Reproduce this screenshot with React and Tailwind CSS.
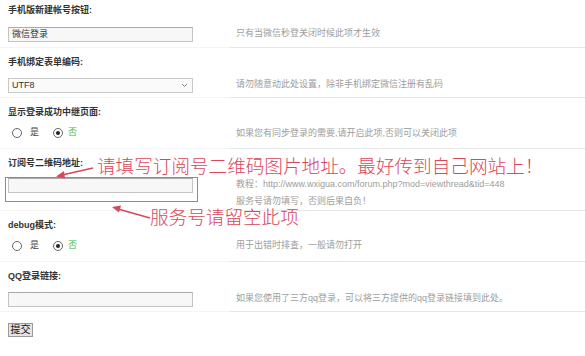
const cjk = { fontFamily: '"Liberation Sans", "Noto Sans CJK SC", sans-serif' };

function Label({ children, first }) {
    return (
        <div className={`${first ? "pt-[3px]" : "pt-[7px]"} pl-[8px] text-[9px] leading-[14px] font-bold text-[#333]`}>
            {children}
        </div>
    );
}

function Row({ children, tips, pt = "pt-[9px]", tipPt = "pt-[7px]", pb = "pb-[4px]" }) {
    return (
        <div className="flex items-stretch">
            <div className={`w-[230px] pl-[8px] ${pt} ${pb} border-b border-[#f4f4f4]`}>{children}</div>
            <div className={`flex-1 pl-[6px] ${tipPt} border-b border-[#e8e8e8] text-[9px] leading-[17px] text-[#9d9d9d]`}>
                {tips}
            </div>
        </div>
    );
}

function Radios() {
    return (
        <div className="flex items-center h-[15px] text-[9px] text-[#444]">
            <span className="w-[10px] h-[10px] rounded-full border border-[#666] bg-white ml-[4px]"></span>
            <span className="ml-[8px]">是</span>
            <span className="w-[10px] h-[10px] rounded-full border border-[#666] bg-white ml-[14px] flex items-center justify-center">
                <span className="w-[4px] h-[4px] rounded-full bg-[#222]"></span>
            </span>
            <span className="ml-[5px] text-[#3cb94a]">否</span>
        </div>
    );
}

function TextInput({ value }) {
    return (
        <div className="w-[185px] h-[15px] border border-[#c4c4c4] border-t-[#a9a9a9] bg-[#f7f7f7] text-[9px] leading-[13px] pl-[3px] text-[#333]">
            {value}
        </div>
    );
}

export default function App() {
    return (
        <div className="relative w-[585px] h-[356px] bg-white overflow-hidden" style={cjk}>
            <Label first>手机版新建帐号按钮:</Label>
            <Row pt="pt-[10px]" tipPt="pt-[8px]" pb="pb-[5px]" tips="只有当微信秒登关闭时候此项才生效">
                <TextInput value="微信登录" />
            </Row>

            <Label>手机绑定表单编码:</Label>
            <Row tips="请勿随意动此处设置，除非手机绑定微信注册有乱码">
                <div className="w-[185px] h-[15px] border border-[#c8c8c8] bg-[#fafafa] flex items-center justify-between px-[3px] text-[9px] text-[#333]">
                    <span>UTF8</span>
                    <svg width="7" height="5" viewBox="0 0 7 5" className="mr-[1px]">
                        <path d="M1 1 L3.5 3.5 L6 1" fill="none" stroke="#888" strokeWidth="1" />
                    </svg>
                </div>
            </Row>

            <Label>显示登录成功中继页面:</Label>
            <Row pt="pt-[6px]" tipPt="pt-[6px]" pb="pb-[8px]" tips="如果您有同步登录的需要,请开启此项,否则可以关闭此项">
                <Radios />
            </Row>

            <Label>订阅号二维码地址:</Label>
            <Row pt="pt-[8px]" tipPt="pt-[6px]" pb="pb-[2px]" tips={
                <>
                    <div>教程：http://www.wxigua.com/forum.php?mod=viewthread&amp;tid=448</div>
                    <div>服务号请勿填写，否则后果自负！</div>
                </>
            }>
                <TextInput value="" />
            </Row>

            <Label>debug模式:</Label>
            <Row pt="pt-[6px]" tipPt="pt-[5px]" pb="pb-[8px]" tips="用于出错时排查，一般请勿打开">
                <Radios />
            </Row>

            <Label>QQ登录链接:</Label>
            <Row tips="如果您使用了三方qq登录，可以将三方提供的qq登录链接填到此处。">
                <TextInput value="" />
            </Row>

            <div className="pl-[8px] pt-[4px]">
                <button className="h-[14px] w-[25px] border border-[#999] bg-[#e4e4e4] text-[10px] leading-[12px] text-[#111]">提交</button>
            </div>

            {/* annotations drawn over the form */}
            <div className="absolute left-[5px] top-[177px] w-[193px] h-[25px] border border-[#c9707a]"></div>
            <div className="absolute left-[97px] top-[154px] text-[18.6px] leading-[26px] font-light text-[#d9475a] whitespace-nowrap">
                请填写订阅号二维码图片地址。最好传到自己网站上！
            </div>
            <div className="absolute left-[150px] top-[205px] text-[18.6px] leading-[26px] font-light text-[#d9475a] whitespace-nowrap">
                服务号请留空此项
            </div>
            <svg className="absolute left-0 top-0" width="585" height="356" viewBox="0 0 585 356">
                <line x1="93" y1="168" x2="62" y2="175" stroke="#d9475a" strokeWidth="1.6" />
                <path d="M56 176.5 L64 171 L65 178.5 Z" fill="#d9475a" />
                <line x1="150" y1="218" x2="118" y2="209" stroke="#d9475a" strokeWidth="1.6" />
                <path d="M112 207 L121 205.5 L119 212.5 Z" fill="#d9475a" />
            </svg>
        </div>
    );
}
